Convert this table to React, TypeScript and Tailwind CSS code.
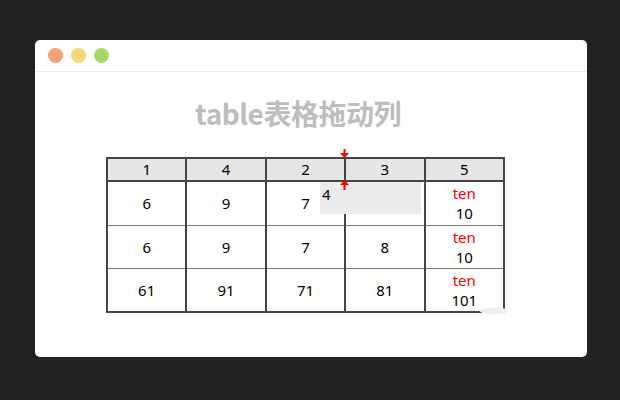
import React from 'react';

const cols = ['1', '4', '2', '3', '5'];
const rows = [
  ['6', '9', '7', '', '10'],
  ['6', '9', '7', '8', '10'],
  ['61', '91', '71', '81', '101'],
];

function Arrow({ dir }: { dir: 'down' | 'up' }) {
  return (
    <svg width="9" height="10" viewBox="0 0 9 10">
      {dir === 'down' ? (
        <path d="M3.5 0h2v4h3.5L4.5 9 0 4h3.5z" fill="#ff0000" />
      ) : (
        <path d="M4.5 0L9 5H5.5v5h-2V5H0z" fill="#ff0000" />
      )}
    </svg>
  );
}

export default function App() {
  return (
    <div
      className="w-[620px] h-[400px] bg-[#222222] pt-[40px] pl-[35px]"
      style={{ fontFamily: '"Noto Sans", "Open Sans", sans-serif' }}
    >
      <div className="w-[552px] h-[317px] bg-white rounded-[5px] flex flex-col">
        <div className="h-[32px] flex items-center gap-[8px] pl-[13px] border-b border-[#ececec]">
          <span className="w-[15px] h-[15px] rounded-full bg-[#f5a27a]" />
          <span className="w-[15px] h-[15px] rounded-full bg-[#f7d77a]" />
          <span className="w-[15px] h-[15px] rounded-full bg-[#a6d866]" />
        </div>
        <h1
          className="text-center text-[28px] font-bold text-[#bdbdbd] mt-[22px] leading-[38px] pr-[26px] tracking-[-0.5px]"
          style={{ fontFamily: '"Noto Sans CJK SC", "Noto Sans", sans-serif' }}
        >
          table表格拖动列
        </h1>
        <div className="relative ml-[71px] mt-[25px] w-[399px]">
          <table className="border-collapse border-2 border-[#444] w-[399px] table-fixed text-[15px] text-black">
            <thead>
              <tr className="bg-[#e6e6e6] h-[23px]">
                {cols.map((c, i) => (
                  <th key={i} className="border-2 border-[#444] font-normal p-0 leading-[19px]">
                    {c}
                  </th>
                ))}
              </tr>
            </thead>
            <tbody>
              {rows.map((r, ri) => (
                <tr key={ri} className={ri === 1 ? 'h-[43px]' : 'h-[44px]'}>
                  {r.map((v, ci) => (
                    <td
                      key={ci}
                      className="border-x-2 border-y border-x-[#444] border-y-[#777] text-center p-0 leading-[20px]"
                    >
                      {ci === 4 ? (
                        <div className="flex flex-col items-center">
                          <span className="text-[#ff0000]">ten</span>
                          <span>{v}</span>
                        </div>
                      ) : (
                        v
                      )}
                    </td>
                  ))}
                </tr>
              ))}
            </tbody>
          </table>
          <div className="absolute left-[214px] top-[25px] w-[101px] h-[32px] bg-[#ebebeb] text-[15px] leading-[20px] pl-[2px] pt-[2px] text-black">
            4
          </div>
          <div className="absolute left-[234px] top-[-8px]">
            <Arrow dir="down" />
          </div>
          <div className="absolute left-[234px] top-[23px]">
            <Arrow dir="up" />
          </div>
          <svg className="absolute left-[370px] top-[147px]" width="36" height="12" viewBox="0 0 36 12">
            <ellipse cx="18" cy="7" rx="14" ry="3.5" fill="#efefef" />
          </svg>
        </div>
      </div>
    </div>
  );
}
